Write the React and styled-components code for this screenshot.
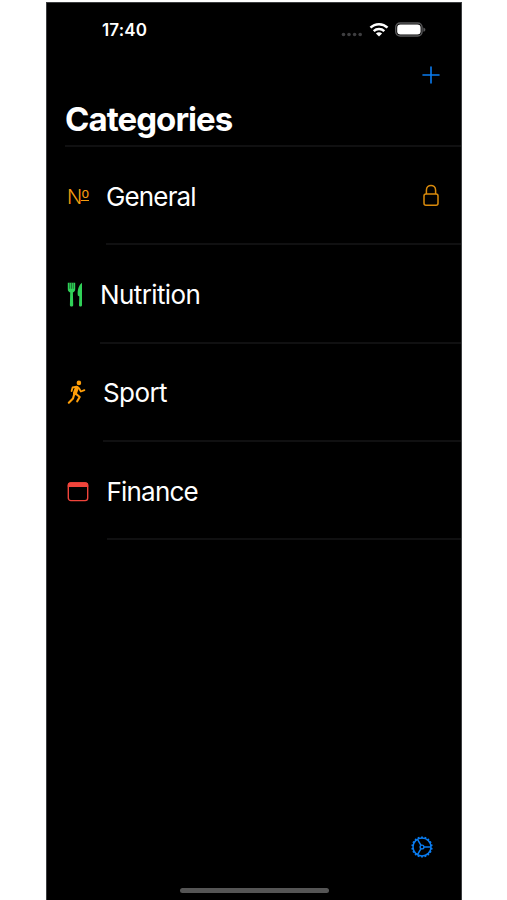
import React from 'react';
import styled, { createGlobalStyle } from 'styled-components';

const GlobalStyle = createGlobalStyle`
* {
  margin: 0;
  padding: 0;
  box-sizing: border-box;
}
body {
  background-color: #fff;
  font-family: Inter, "Liberation Sans", sans-serif;
  overflow: hidden;
}
svg {
  display: block;
  flex: none;
}
`;

const Phone = styled.main`
  width: 416px;
  height: 898px;
  margin: 2px 0 0 46px;
  display: flex;
  flex-direction: column;
  background-color: #000;
  border: 1px solid #3c3e40;
  border-bottom: none;
  color: #fff;
`;

const StatusBar = styled.div`
  height: 54px;
  padding: 0 35px 0 55px;
  display: flex;
  align-items: center;
  justify-content: space-between;
`;

const Time = styled.span`
  font-size: 17px;
  font-weight: 600;
  letter-spacing: 0.15px;
`;

const StatusIcons = styled.div`
  display: flex;
  align-items: center;
  gap: 6px;
`;

const NavBar = styled.div`
  height: 36px;
  padding-right: 20px;
  display: flex;
  align-items: center;
  justify-content: flex-end;
`;

const Title = styled.h1`
  height: 54px;
  margin-left: 18px;
  padding-top: 6px;
  font-size: 33px;
  line-height: 40px;
  font-weight: 700;
  letter-spacing: -0.95px;
  border-bottom: 2px solid #101011;
`;

const List = styled.ul`
  list-style: none;
  flex: 1;
`;

const Row = styled.li`
  height: 98.3px;
  padding-left: 20px;
  display: flex;
`;

const RowIcon = styled.div`
  width: ${(props) => props.$width}px;
  padding-top: 1px;
  display: flex;
  align-items: center;
  color: ${(props) => props.$color};
`;

const RowBody = styled.div`
  flex: 1;
  padding: 2px 21px 0 0;
  display: flex;
  align-items: center;
  justify-content: space-between;
  border-bottom: 2px solid #101011;
`;

const RowLabel = styled.span`
  font-size: 26px;
  line-height: 32px;
  padding-top: 1px;
  letter-spacing: ${(props) => props.$spacing};
`;

const Numero = styled.span`
  display: flex;
  align-items: flex-start;
  font-size: 20px;
  line-height: 24px;
  font-weight: 300;
`;

const Ordinal = styled.span`
  height: 16px;
  margin-left: -1px;
  font-size: 19px;
  line-height: 25px;
  letter-spacing: -0.5px;
  border-bottom: 1px solid currentColor;
`;

const Toolbar = styled.div`
  height: 63px;
  padding: 10px 27px 0 0;
  display: flex;
  justify-content: flex-end;
  align-items: flex-start;
`;

const HomeIndicator = styled.div`
  width: 149px;
  height: 5px;
  margin: 0 auto 7px;
  border-radius: 3px;
  background-color: #555;
`;

const Signal = () => (
  <svg width="22" height="16" viewBox="0 0 22 16" fill="#3e3e40">
    <circle cx="2.5" cy="12.5" r="1.8" />
    <circle cx="8" cy="12.5" r="1.8" />
    <circle cx="13.6" cy="12.5" r="1.8" />
    <circle cx="19.2" cy="12.5" r="1.8" />
  </svg>
);

const Wifi = () => (
  <svg width="20" height="16" viewBox="0 0 20 16" fill="none" stroke="#fff" strokeWidth="2.5">
    <path d="M1.5 5.7C6.2 1.1 13.8 1.1 18.5 5.7" />
    <path d="M4.7 9.1C7.7 6.3 12.3 6.3 15.3 9.1" />
    <path d="M10 14.5L6.9 11.4C8.6 9.9 11.4 9.9 13.1 11.4Z" fill="#fff" stroke="none" />
  </svg>
);

const Battery = () => (
  <svg width="31" height="16" viewBox="0 0 31 16">
    <rect x="0.7" y="1" width="26.4" height="13" rx="4.4" fill="none" stroke="#58585a" strokeWidth="1.4" />
    <rect x="2.2" y="2.6" width="23.4" height="9.9" rx="3.2" fill="#fff" />
    <path d="M28.4 5.4C31 6.2 31 9 28.4 9.8Z" fill="#58585a" />
  </svg>
);

const Plus = () => (
  <svg width="20" height="20" viewBox="0 0 20 20" stroke="#0a7cf0" strokeWidth="1.6" strokeLinecap="round">
    <path d="M10 2V18M2 10H18" />
  </svg>
);

const ForkKnife = () => (
  <svg width="18" height="26" viewBox="0 0 18 26" fill="currentColor">
    <path d="M0.8 0.8H8.2V7.2C8.2 9 7.2 9.8 5.9 10.4L6.2 23.3C6.2 24.9 2.9 24.9 2.9 23.3L3.2 10.4C1.8 9.8 0.8 9 0.8 7.2Z" />
    <path d="M2.7 0.8V6.8M4.5 0.8V6.8M6.3 0.8V6.8" stroke="#000" strokeOpacity="0.6" strokeWidth="0.7" />
    <path d="M15 0.8V23.3C15 24.9 12 24.9 12 23.3L12.3 14.6L10.8 13.4C10.2 7.8 12 3 15 0.8Z" />
  </svg>
);

const Runner = () => (
  <svg width="20" height="26" viewBox="0 0 20 26" fill="none" stroke="currentColor" strokeWidth="1.8" strokeLinecap="round" strokeLinejoin="round">
    <circle cx="11.9" cy="2.9" r="2.3" fill="currentColor" stroke="none" />
    <path d="M9.8 8L7.9 13.2" strokeWidth="4" />
    <path d="M4.6 11.1L5.6 7.5L9.6 6.6L12 8.3L13.9 11.5L17.4 10.1" />
    <path d="M7.2 14.2L6 18.5L1.8 22.7" strokeWidth="2.1" />
    <path d="M8.6 13.5L12.7 17L10.2 21.3" strokeWidth="2.1" />
  </svg>
);

const WindowIcon = () => (
  <svg width="22" height="22" viewBox="0 0 22 22">
    <rect x="1.3" y="2" width="19.4" height="17.6" rx="2.6" fill="none" stroke="currentColor" strokeWidth="1.4" />
    <path d="M0.8 6V4.4C0.8 2.5 2 1.3 4 1.3H18C20 1.3 21.2 2.5 21.2 4.4V6Z" fill="currentColor" />
  </svg>
);

const Lock = () => (
  <svg width="18" height="24" viewBox="0 0 18 24" fill="none" stroke="#d98a0b" strokeWidth="1.5">
    <rect x="2" y="10" width="14" height="11.3" rx="2" />
    <path d="M4.4 10V6.2C4.4 -0.1 13.6 -0.1 13.6 6.2V10" />
  </svg>
);

const teeth = Array.from({ length: 18 }, (_, i) => i * 20);

const Gear = () => (
  <svg width="24" height="24" viewBox="0 0 24 24" fill="none" stroke="#0a7cf0" strokeWidth="1.5">
    <circle cx="12" cy="12" r="9" />
    {teeth.map((angle) => (
      <path key={angle} d="M12 1.4V3.2" strokeWidth="1.8" transform={`rotate(${angle} 12 12)`} />
    ))}
    <circle cx="12" cy="12" r="1.9" strokeWidth="1.4" />
    <path d="M14 12H21M11 10.3L7.5 4.3M11 13.7L7.5 19.7" />
  </svg>
);

const NumeroIcon = () => (
  <Numero>
    N<Ordinal>º</Ordinal>
  </Numero>
);

const categories = [
  { name: 'General', icon: <NumeroIcon />, color: '#f59d10', width: 39, spacing: '-0.85px', locked: true },
  { name: 'Nutrition', icon: <ForkKnife />, color: '#30d158', width: 33, spacing: '-0.6px' },
  { name: 'Sport', icon: <Runner />, color: '#ff9f0a', width: 36, spacing: '-0.6px' },
  { name: 'Finance', icon: <WindowIcon />, color: '#f0443b', width: 39.5, spacing: '-0.8px' },
];

export default function App() {
  return (
    <>
      <GlobalStyle />
      <Phone>
        <StatusBar>
          <Time>17:40</Time>
          <StatusIcons>
            <Signal />
            <Wifi />
            <Battery />
          </StatusIcons>
        </StatusBar>
        <NavBar>
          <Plus />
        </NavBar>
        <Title>Categories</Title>
        <List>
          {categories.map((item) => (
            <Row key={item.name}>
              <RowIcon $width={item.width} $color={item.color}>{item.icon}</RowIcon>
              <RowBody>
                <RowLabel $spacing={item.spacing}>{item.name}</RowLabel>
                {item.locked && <Lock />}
              </RowBody>
            </Row>
          ))}
        </List>
        <Toolbar>
          <Gear />
        </Toolbar>
        <HomeIndicator />
      </Phone>
    </>
  );
}
